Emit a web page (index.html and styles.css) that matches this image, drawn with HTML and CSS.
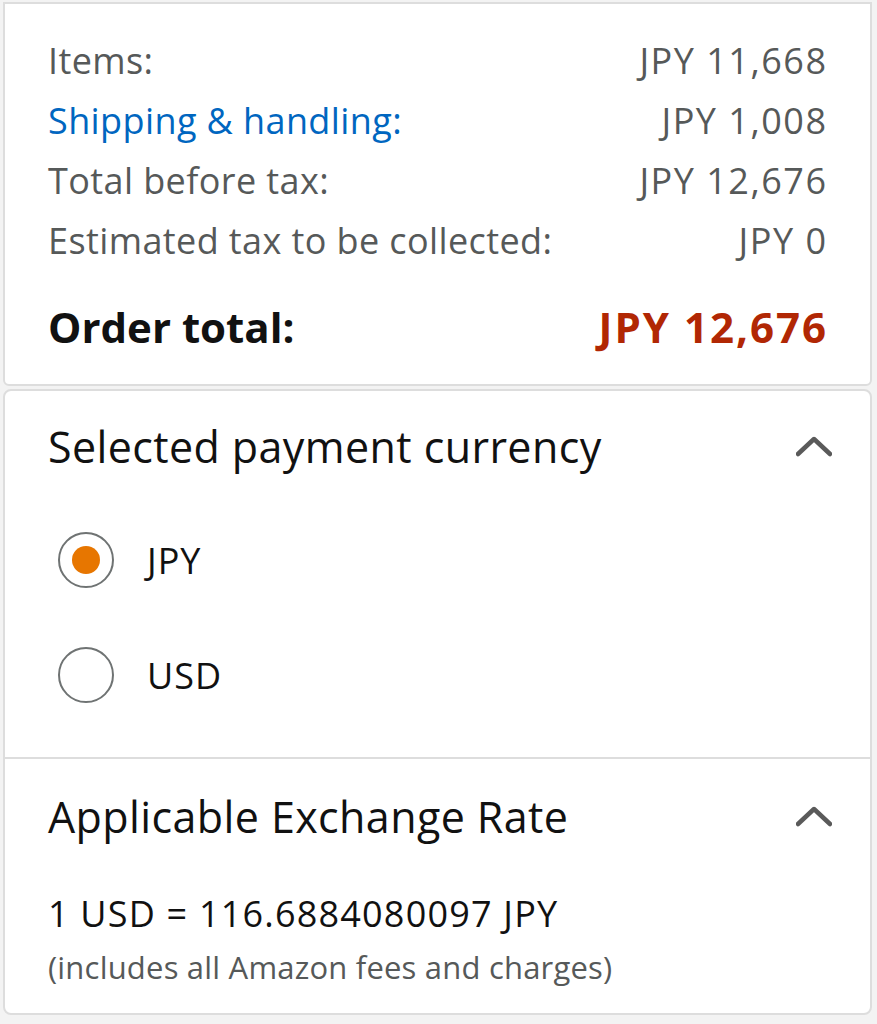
FILE: index.html
```html
<!DOCTYPE html>
<html lang="en">
<head>
    <meta charset="UTF-8">
    <meta name="viewport" content="width=device-width, initial-scale=1.0">
    <title>Order summary</title>
    <link rel="stylesheet" href="styles.css">
</head>
<body>
    <!-- Resumen del pedido -->
    <section class="tarjeta resumen">
        <div class="fila">
            <span>Items:</span>
            <span class="valor">JPY 11,668</span>
        </div>
        <div class="fila">
            <a class="enlace" href="#">Shipping &amp; handling:</a>
            <span class="valor">JPY 1,008</span>
        </div>
        <div class="fila">
            <span>Total before tax:</span>
            <span class="valor">JPY 12,676</span>
        </div>
        <div class="fila">
            <span>Estimated tax to be collected:</span>
            <span class="valor">JPY 0</span>
        </div>
        <div class="fila total">
            <span>Order total:</span>
            <span class="precio">JPY 12,676</span>
        </div>
    </section>

    <section class="tarjeta opciones">
        <div class="bloque">
            <div class="cabecera">
                <h2>Selected payment currency</h2>
                <svg class="chevron" width="36" height="22" viewBox="0 0 36 22">
                    <path d="M2 19 L18 4 L34 19" fill="none" stroke="#5a5a5a" stroke-width="4.5" stroke-linecap="round" stroke-linejoin="round"/>
                </svg>
            </div>
            <label class="radio">
                <span class="circulo marcado"></span>
                <span>JPY</span>
            </label>
            <label class="radio">
                <span class="circulo"></span>
                <span>USD</span>
            </label>
        </div>

        <div class="bloque cambio">
            <div class="cabecera">
                <h2>Applicable Exchange Rate</h2>
                <svg class="chevron" width="36" height="22" viewBox="0 0 36 22">
                    <path d="M2 19 L18 4 L34 19" fill="none" stroke="#5a5a5a" stroke-width="4.5" stroke-linecap="round" stroke-linejoin="round"/>
                </svg>
            </div>
            <p class="tasa">1 USD = 116.6884080097 JPY</p>
            <p class="nota">(includes all Amazon fees and charges)</p>
        </div>
    </section>
</body>
</html>
```

FILE: styles.css
```css
body {
    font-family: 'Open Sans', 'Noto Sans', sans-serif;
    margin: 0;
    padding: 2px 5px 0 3px;
    background-color: #f3f3f3;
    color: #111;
}

.tarjeta {
    background-color: #fff;
    border: 2px solid #ddd;
    border-radius: 8px;
}

.resumen {
    padding: 27px 44px 27px 43px;
    border-radius: 0 0 6px 6px;
}

.fila {
    display: flex;
    justify-content: space-between;
    align-items: baseline;
    font-size: 36px;
    letter-spacing: 0.4px;
    line-height: 60px;
    color: #565959;
}

.fila .valor {
    letter-spacing: 1.5px;
    margin-right: -1.5px;
}

.enlace {
    color: #0066c0;
    text-decoration: none;
}

.fila.total {
    margin-top: 26px;
    font-size: 42px;
    font-weight: 700;
    letter-spacing: 0;
    color: #111;
}

.precio {
    color: #b12704;
    letter-spacing: 2px;
    margin-right: -2px;
}

.opciones {
    margin-top: 3px;
}

.bloque {
    padding: 26px 38px 42px 43px;
}

.cabecera {
    display: flex;
    justify-content: space-between;
    align-items: center;
}

.cabecera h2 {
    margin: 0;
    font-size: 43px;
    font-weight: 400;
    letter-spacing: 0.4px;
    line-height: 60px;
}

.chevron {
    display: block;
    margin-top: -2px;
}

.radio {
    display: flex;
    align-items: center;
    gap: 33px;
    height: 80px;
    margin-top: 43px;
    font-size: 36px;
    letter-spacing: 1px;
    cursor: pointer;
}

.radio + .radio {
    margin-top: 35px;
}

.circulo {
    width: 56px;
    height: 56px;
    margin-left: 10px;
    border: 2px solid #6f7373;
    border-radius: 50%;
    display: flex;
    align-items: center;
    justify-content: center;
    box-sizing: border-box;
}

.circulo.marcado::after {
    content: '';
    width: 28px;
    height: 28px;
    border-radius: 50%;
    background-color: #e77600;
}

.cambio {
    border-top: 2px solid #ddd;
    padding-top: 28px;
    padding-bottom: 20px;
}

.tasa,
.nota {
    margin: 0;
    line-height: 52px;
}

.tasa {
    margin-top: 41px;
    font-size: 36px;
    letter-spacing: 1.2px;
}

.nota {
    margin-top: 1px;
    font-size: 31px;
    letter-spacing: 0.2px;
    color: #565959;
}
```
